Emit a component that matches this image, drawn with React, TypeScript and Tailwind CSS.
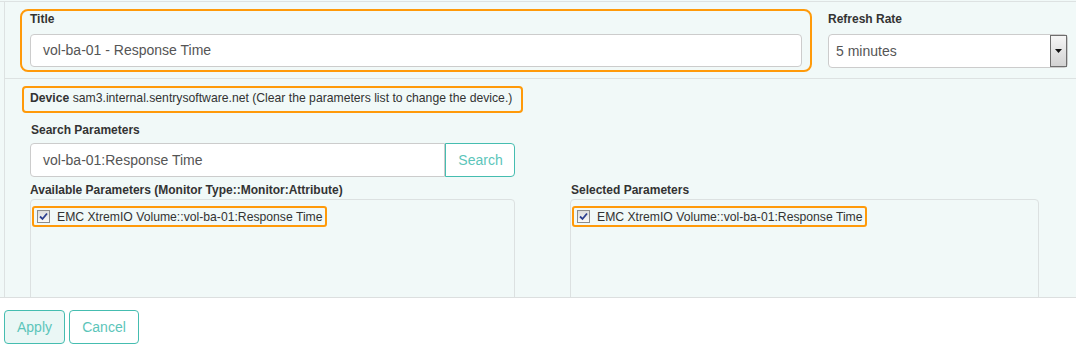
import React from "react";

const ORANGE = "border-[#ff9a0a]";

function Checkbox() {
  return (
    <span className="w-[13px] h-[13px] border border-[#8c8c8c] bg-linear-to-b from-[#dcdcdc] to-[#fafafa] flex items-center justify-center shrink-0">
      <svg width="9" height="9" viewBox="0 0 9 9">
        <path d="M1 4.5 L3.5 7 L8 1.5" fill="none" stroke="#2c3f8f" strokeWidth="1.8" />
      </svg>
    </span>
  );
}

function ParamItem() {
  return (
    <div className={`flex w-fit items-center h-[21px] border-2 ${ORANGE} rounded-[3px] pl-[3px] pr-[2px]`}>
      <Checkbox />
      <span className="ml-[7px] text-[12.2px] leading-[17px] pt-[2px] text-[#333]">
        EMC XtremIO Volume::vol-ba-01:Response Time
      </span>
    </div>
  );
}

export default function App() {
  return (
    <div className="w-[1076px] h-[351px] bg-white font-['Liberation_Sans',Arial,sans-serif] text-[#333] overflow-hidden">
      {/* form panel */}
      <div className="h-[298px] bg-[#f1f9f8] border-b border-[#dcdfdf] pt-[1px] overflow-hidden">
        <div className="border-t border-[#dde2e2]">
          <div className="ml-[4px] border-l border-[#dde2e2] h-[300px]">
            {/* title row */}
            <div className="flex h-[77px] border-b border-[#dde2e2] pl-[15px] pt-[7px]">
              <div className={`w-[792px] h-[63px] border-2 ${ORANGE} rounded-[8px] px-[8px] pt-px`}>
                <div className="text-[12px] leading-[15px] font-bold mb-[7px]">Title</div>
                <div className="h-[33px] bg-white border border-[#cccccc] rounded-[4px] flex items-center pl-[12px] text-[14px] text-[#555]">
                  vol-ba-01 - Response Time
                </div>
              </div>
              <div className="ml-[16px] w-[240px] pt-[3px]">
                <div className="text-[12px] leading-[15px] font-bold mb-[7px]">Refresh Rate</div>
                <div className="h-[34px] bg-white border border-[#cccccc] rounded-[4px] flex items-center text-[14px] text-[#555]">
                  <span className="flex-1 pl-[7px]">5 minutes</span>
                  <span className="w-[17px] h-[32px] border border-[#6e6e6e] bg-linear-to-b from-[#f6f6f6] to-[#d2d2d2] flex items-center justify-center">
                    <svg width="7" height="4" viewBox="0 0 7 4">
                      <path d="M0 0 H7 L3.5 4 Z" fill="#111" />
                    </svg>
                  </span>
                </div>
              </div>
            </div>

            {/* device row */}
            <div className="pl-[17px] pt-[7px]">
              <div className={`w-fit h-[27px] border-2 ${ORANGE} rounded-[4px] pl-[6px] pr-[9px] pt-[3px] text-[12.2px] leading-[15px]`}>
                <span className="font-bold">Device</span> sam3.internal.sentrysoftware.net (Clear the parameters list to change the device.)
              </div>
            </div>

            {/* search */}
            <div className="pl-[25px] pt-[10px]">
              <div className="text-[12px] leading-[15px] font-bold pl-px mb-[5px]">Search Parameters</div>
              <div className="flex w-[485px] h-[34px]">
                <div className="flex-1 bg-white border border-[#cccccc] rounded-l-[4px] flex items-center pl-[12px] text-[14px] text-[#555]">
                  vol-ba-01:Response Time
                </div>
                <button className="w-[70px] border border-[#45bdb0] rounded-r-[4px] bg-white text-[14px] text-[#5cc5ba] pl-px">
                  Search
                </button>
              </div>

              {/* parameters lists */}
              <div className="flex mt-[6px]">
                <div className="w-[485px]">
                  <div className="text-[12px] leading-[15px] font-bold mb-px">
                    Available Parameters (Monitor Type::Monitor:Attribute)
                  </div>
                  <div className="h-[120px] border border-[#dce1e1] rounded-[4px] pl-px pt-[6px]">
                    <ParamItem />
                  </div>
                </div>
                <div className="w-[469px] ml-[55px]">
                  <div className="text-[12px] leading-[15px] font-bold mb-px pl-px">Selected Parameters</div>
                  <div className="h-[120px] border border-[#dce1e1] rounded-[4px] pl-px pt-[6px]">
                    <ParamItem />
                  </div>
                </div>
              </div>
            </div>
          </div>
        </div>
      </div>

      {/* actions */}
      <div className="flex gap-[4px] pl-[4px] pt-[12px]">
        <button className="w-[61px] h-[34px] border border-[#45bdb0] rounded-[4px] bg-[#eaf7f5] text-[14px] text-[#5cc5ba]">
          Apply
        </button>
        <button className="w-[70px] h-[34px] border border-[#45bdb0] rounded-[4px] bg-white text-[14px] text-[#5cc5ba]">
          Cancel
        </button>
      </div>
    </div>
  );
}
